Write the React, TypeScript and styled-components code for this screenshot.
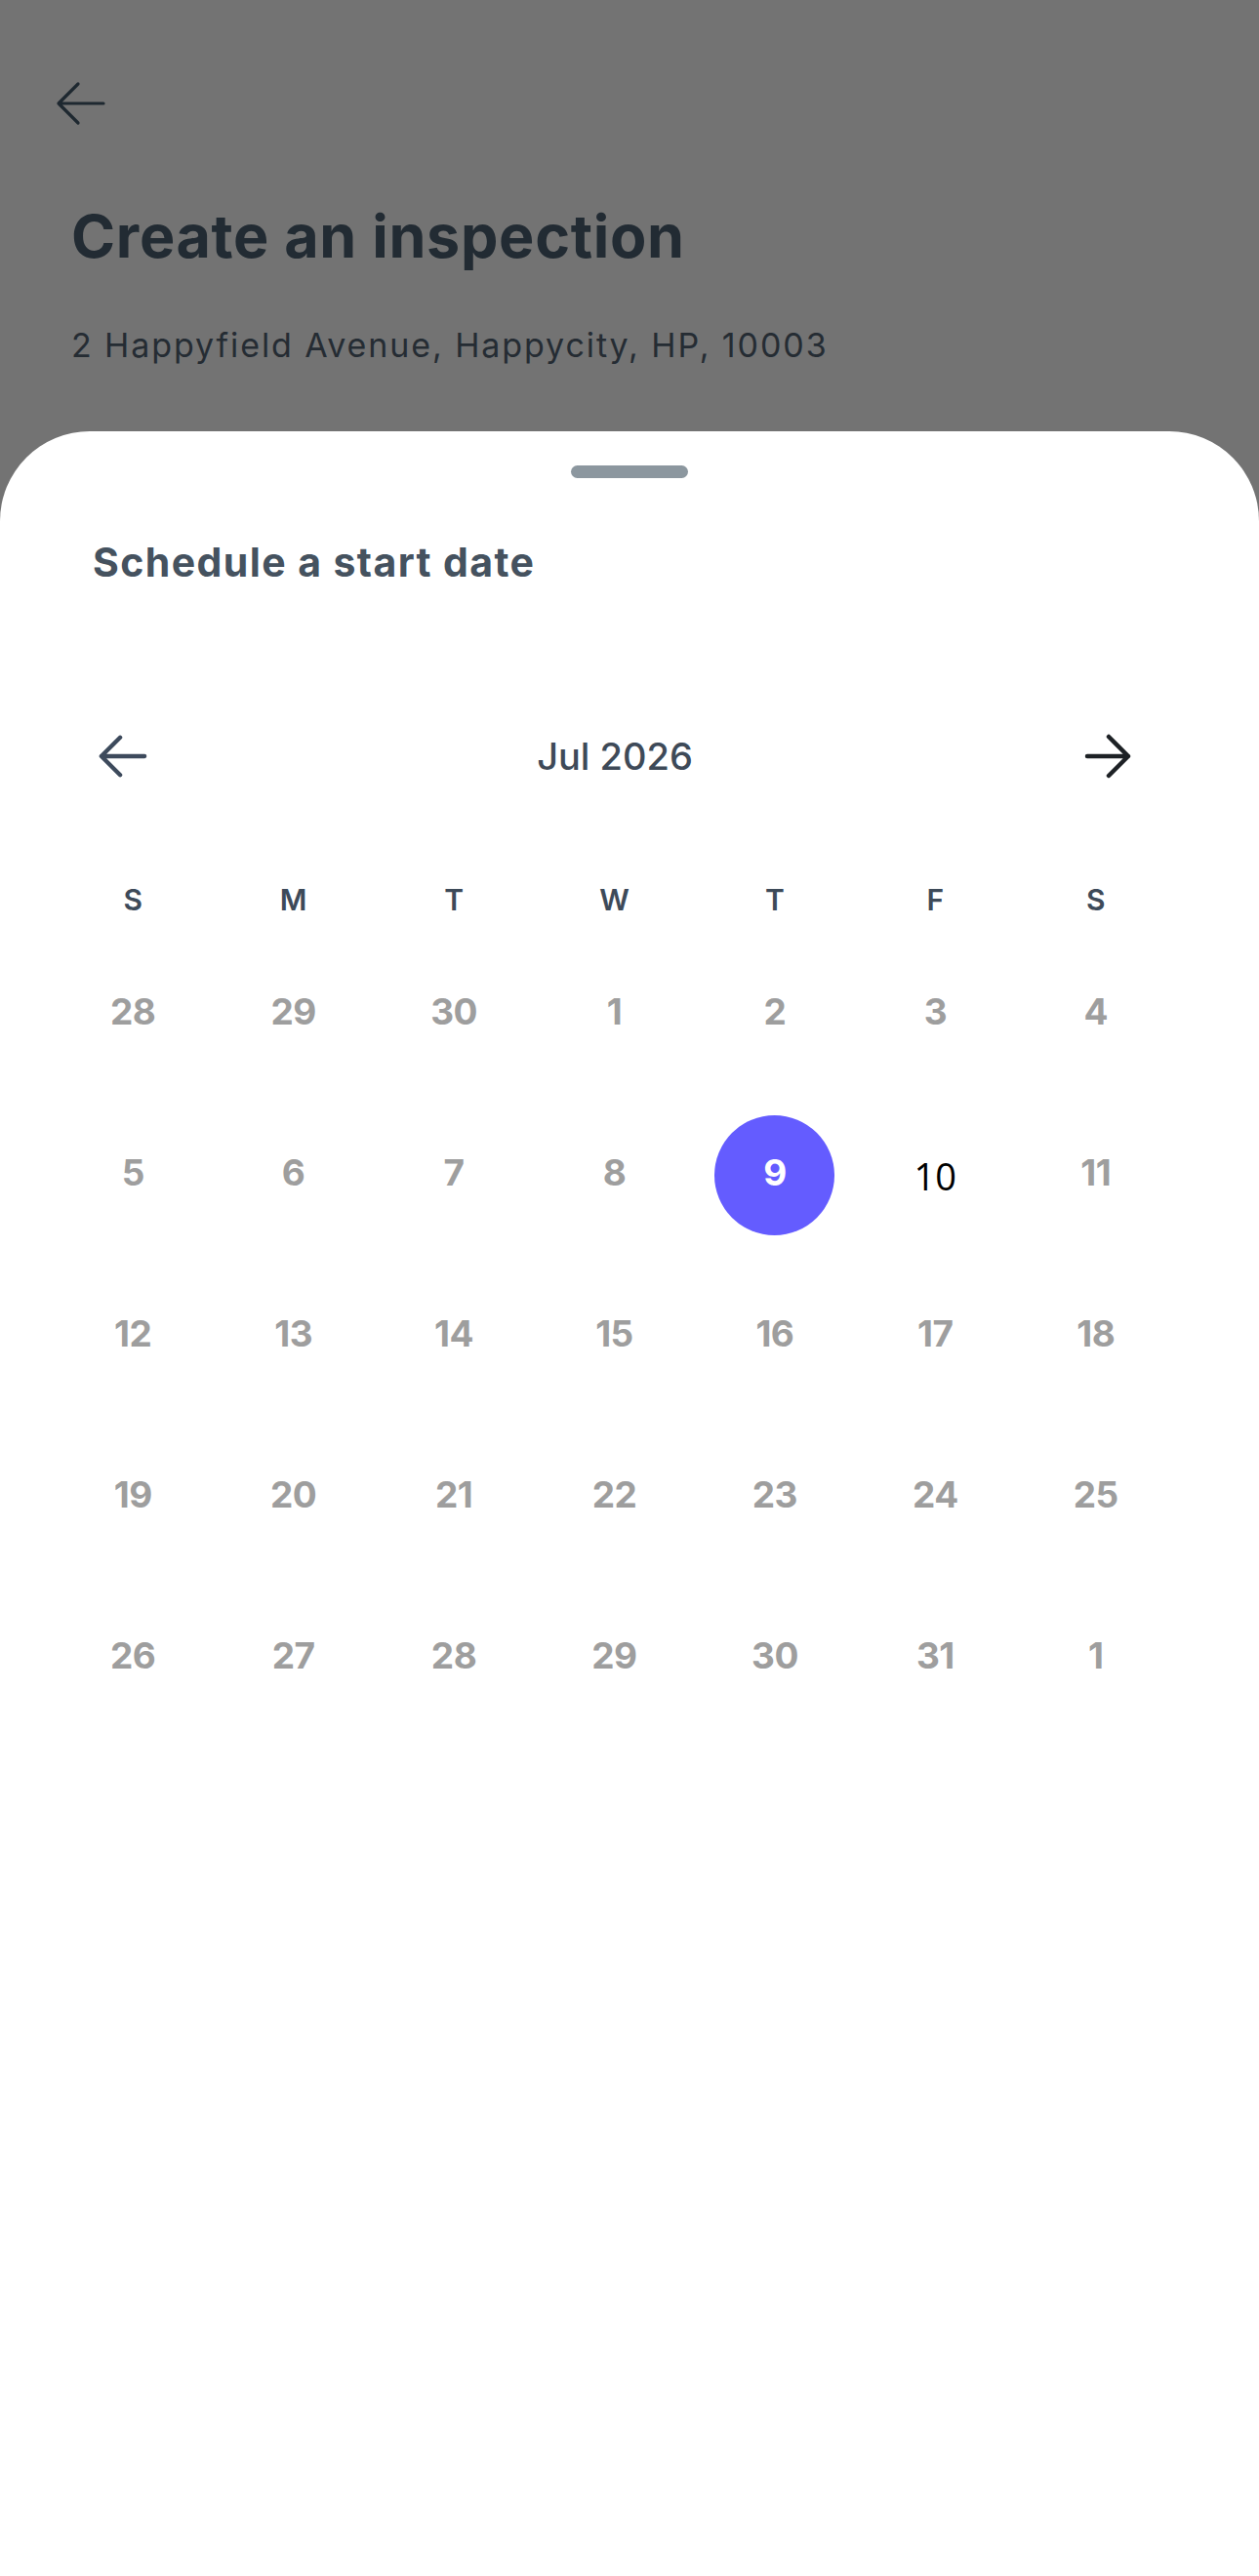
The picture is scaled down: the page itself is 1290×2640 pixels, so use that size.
import styled, { createGlobalStyle } from 'styled-components'

const GlobalStyle = createGlobalStyle`
  html, body {
    margin: 0;
    padding: 0;
    background: #737373;
  }
  * {
    box-sizing: border-box;
  }
`

const Screen = styled.div`
  min-height: 2640px;
  display: flex;
  flex-direction: column;
  background: #737373;
  font-family: 'Inter', 'Lato', 'Liberation Sans', sans-serif;
`

const Header = styled.header`
  padding: 83px 0 71px 56px;
  display: flex;
  flex-direction: column;
`

const BackButton = styled.button`
  width: 54px;
  height: 46px;
  padding: 0;
  border: none;
  background: none;
  display: flex;
  cursor: pointer;
  color: #1e2830;
`

const Title = styled.h1`
  margin: 83px 0 0 17px;
  font-size: 61px;
  line-height: 1;
  font-weight: 700;
  letter-spacing: 0.7px;
  color: #222b33;
`

const Address = styled.p`
  margin: 64px 0 0 17px;
  font-size: 34px;
  line-height: 1;
  font-weight: 400;
  letter-spacing: 1.9px;
  color: #252c33;
`

const Sheet = styled.section`
  flex: 1;
  background: #ffffff;
  border-radius: 92px 92px 0 0;
  padding-top: 35px;
  display: flex;
  flex-direction: column;
`

const Handle = styled.div`
  width: 120px;
  height: 13px;
  border-radius: 7px;
  background: #8c979f;
  align-self: center;
`

const SheetTitle = styled.h2`
  margin: 66px 0 0 95px;
  font-size: 41px;
  line-height: 1;
  font-weight: 700;
  letter-spacing: 1.4px;
  color: #45525f;
`

const MonthNav = styled.div`
  margin: 155px 0 0 100px;
  width: 1060px;
  height: 46px;
  display: flex;
  align-items: center;
`

const NavButton = styled.button<{ $dark?: boolean }>`
  width: 52px;
  height: 46px;
  padding: 0;
  border: none;
  background: none;
  display: flex;
  cursor: pointer;
  color: ${(p) => (p.$dark ? '#1d2125' : '#3d4a5c')};
`

const MonthLabel = styled.div`
  flex: 1;
  text-align: center;
  font-size: 38px;
  line-height: 46px;
  font-weight: 500;
  color: #3e4a58;
`

const Grid = styled.div`
  margin-left: 54px;
  width: 1151px;
  display: grid;
  grid-template-columns: repeat(7, 1fr);
`

const WeekdayRow = styled(Grid)`
  margin-top: 109px;
  margin-bottom: 17px;
`

const Weekday = styled.div`
  text-align: center;
  font-size: 30px;
  line-height: 1;
  font-weight: 600;
  color: #3d4a59;
`

const DayCell = styled.div`
  height: 165px;
  display: flex;
  align-items: center;
  justify-content: center;
`

const DayNumber = styled.span<{ $selected?: boolean; $today?: boolean }>`
  width: 123px;
  height: 123px;
  border-radius: 50%;
  display: flex;
  align-items: center;
  justify-content: center;
  font-size: 37px;
  line-height: 1;
  font-weight: 700;
  letter-spacing: -0.5px;
  color: #9e9e9e;
  ${(p) =>
    p.$selected &&
    `
    background: #645cff;
    color: #ffffff;
    margin-top: 5px;
    padding-bottom: 5px;
  `}
  ${(p) =>
    p.$today &&
    `
    font-family: 'Open Sans', 'Liberation Sans', sans-serif;
    font-weight: 400;
    letter-spacing: 0;
    font-size: 38px;
    color: #000000;
    padding-top: 6px;
  `}
`

const ArrowLeft = ({ stroke = 4.5 }: { stroke?: number }) => (
  <svg width="54" height="46" viewBox="0 0 54 46" fill="none">
    <path
      d="M50 23H4M24 3L4 23L24 43"
      stroke="currentColor"
      strokeWidth={stroke}
      strokeLinecap="round"
      strokeLinejoin="round"
    />
  </svg>
)

const ArrowRight = () => (
  <svg width="52" height="46" viewBox="0 0 52 46" fill="none">
    <path
      d="M6 23H48M28 3L48 23L28 43"
      stroke="currentColor"
      strokeWidth={4.5}
      strokeLinecap="round"
      strokeLinejoin="round"
    />
  </svg>
)

const WEEKDAYS = ['S', 'M', 'T', 'W', 'T', 'F', 'S']

const DAYS = [
  28, 29, 30, 1, 2, 3, 4,
  5, 6, 7, 8, 9, 10, 11,
  12, 13, 14, 15, 16, 17, 18,
  19, 20, 21, 22, 23, 24, 25,
  26, 27, 28, 29, 30, 31, 1
]

const SELECTED_INDEX = 11
const TODAY_INDEX = 12

const App = () => {
  return (
    <>
      <GlobalStyle />
      <Screen>
        <Header>
          <BackButton aria-label="Back">
            <ArrowLeft stroke={3.2} />
          </BackButton>
          <Title>Create an inspection</Title>
          <Address>2 Happyfield Avenue, Happycity, HP, 10003</Address>
        </Header>
        <Sheet>
          <Handle />
          <SheetTitle>Schedule a start date</SheetTitle>
          <MonthNav>
            <NavButton aria-label="Previous month">
              <ArrowLeft />
            </NavButton>
            <MonthLabel>Jul 2026</MonthLabel>
            <NavButton $dark aria-label="Next month">
              <ArrowRight />
            </NavButton>
          </MonthNav>
          <WeekdayRow>
            {WEEKDAYS.map((d, i) => (
              <Weekday key={i}>{d}</Weekday>
            ))}
          </WeekdayRow>
          <Grid>
            {DAYS.map((d, i) => (
              <DayCell key={i}>
                <DayNumber $selected={i === SELECTED_INDEX} $today={i === TODAY_INDEX}>
                  {d}
                </DayNumber>
              </DayCell>
            ))}
          </Grid>
        </Sheet>
      </Screen>
    </>
  )
}

export default App
